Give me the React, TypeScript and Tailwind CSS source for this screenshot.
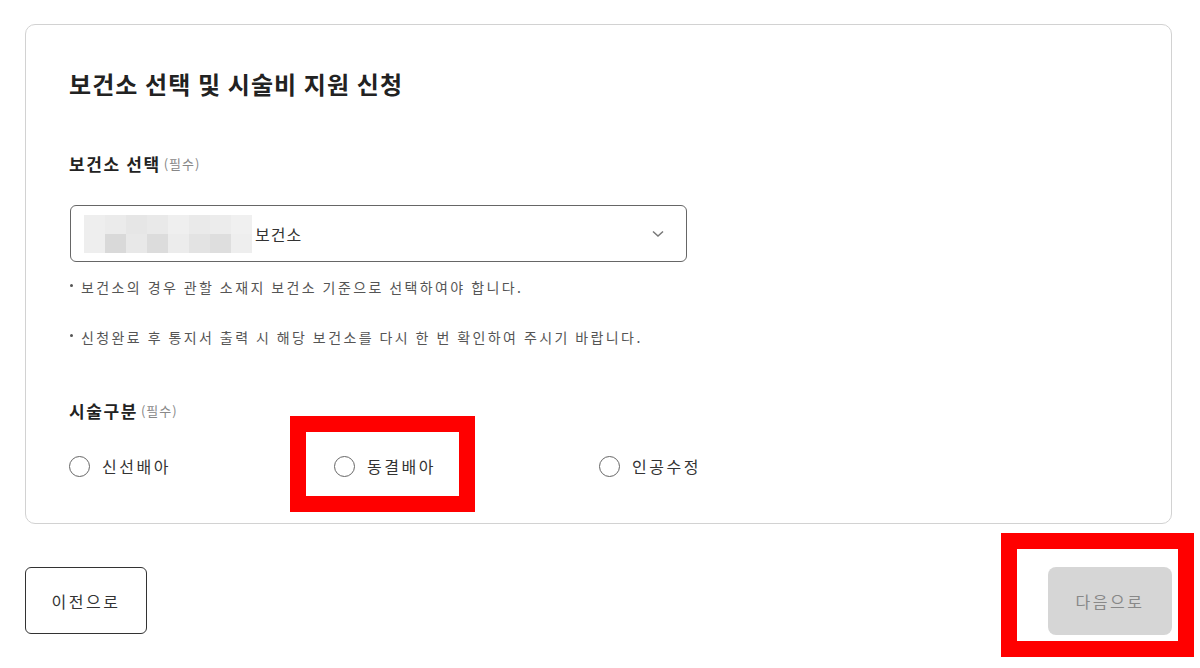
import React from "react";

const font = { fontFamily: '"Noto Sans CJK KR", "Noto Sans", sans-serif' };

const mosaic: string[][] = [
  ["#eeeeee", "#ebebeb", "#e6e6e6", "#e9e9e9", "#efefef", "#eaeaea", "#ececec", "#f0f0f0"],
  ["#eeeeee", "#d9d9d9", "#e8e8e8", "#dcdcdc", "#ececec", "#e3e3e3", "#dedede", "#eeeeee"],
];

function Radio({ label }: { label: string }) {
  return (
    <div className="w-[265px] flex items-center h-[22px]">
      <span className="w-[21px] h-[21px] rounded-full border-[1.5px] border-[#666] bg-white shrink-0" />
      <span className="ml-[12px] text-[16px] text-[#333] leading-[22px] tracking-[2.5px]">{label}</span>
    </div>
  );
}

function Label({ text }: { text: string }) {
  return (
    <div className="h-[22px] flex items-center">
      <span className="text-[17px] font-bold text-[#222] leading-[22px] tracking-[1.6px]">{text}</span>
      <span className="ml-[3px] text-[13px] text-[#888] leading-[22px] tracking-[1px]">(필수)</span>
    </div>
  );
}

function Note({ text }: { text: string }) {
  return (
    <div className="h-[20px] flex items-center text-[14px] leading-[20px] text-[#555] tracking-[2.4px]">
      <span className="inline-block w-[3px] h-[3px] rounded-full bg-[#555] ml-[1px] mr-[8px] mt-[-4px]" />
      <span>{text}</span>
    </div>
  );
}

export default function App() {
  return (
    <div className="relative w-[1200px] h-[668px] bg-white overflow-hidden" style={font}>
      <div className="pt-[24px] pl-[25px]">
        <div className="w-[1147px] border border-[#d2d2d2] rounded-[10px] pl-[43px] pt-[43px] pb-[46px]">
          <h1 className="h-[32px] text-[24px] font-bold text-[#222] leading-[32px] tracking-[1.1px]">
            보건소 선택 및 시술비 지원 신청
          </h1>

          <div className="mt-[53px]">
            <Label text="보건소 선택" />
          </div>

          <div className="mt-[30px] ml-[1px] w-[617px] h-[57px] border-[1.5px] border-[#666] rounded-[6px] flex items-center pl-[13px] pr-[22px]">
            <div className="flex flex-col">
              {mosaic.map((row, i) => (
                <div key={i} className="flex">
                  {row.map((c, j) => (
                    <div key={j} className="w-[21px] h-[19px]" style={{ backgroundColor: c }} />
                  ))}
                </div>
              ))}
            </div>
            <span className="ml-[3px] text-[16px] text-[#333] tracking-[1px]">보건소</span>
            <svg className="ml-auto" width="12" height="8" viewBox="0 0 12 8">
              <polyline points="1,1.5 6,6 11,1.5" fill="none" stroke="#777" strokeWidth="1.5" />
            </svg>
          </div>

          <div className="mt-[15px]">
            <Note text="보건소의 경우 관할 소재지 보건소 기준으로 선택하여야 합니다." />
          </div>
          <div className="mt-[30px]">
            <Note text="신청완료 후 통지서 출력 시 해당 보건소를 다시 한 번 확인하여 주시기 바랍니다." />
          </div>

          <div className="mt-[53px]">
            <Label text="시술구분" />
          </div>

          <div className="mt-[33px] flex">
            <Radio label="신선배아" />
            <Radio label="동결배아" />
            <Radio label="인공수정" />
          </div>
        </div>
      </div>

      <div className="mt-[43px] pl-[25px] pr-[28px] flex justify-between items-start">
        <button className="w-[122px] h-[67px] border-[1.5px] border-[#333] rounded-[6px] bg-white text-[16px] text-[#333] tracking-[2.5px]">
          이전으로
        </button>
        <button className="w-[124px] h-[68px] rounded-[8px] bg-[#d6d6d6] text-[16px] text-[#888] tracking-[2.5px]">
          다음으로
        </button>
      </div>

      <div className="absolute left-[290px] top-[416px] w-[185px] h-[96px] border-[16px] border-[#ff0000]" />
      <div className="absolute left-[1001px] top-[533px] w-[193px] h-[124px] border-[16px] border-[#ff0000]" />
    </div>
  );
}
